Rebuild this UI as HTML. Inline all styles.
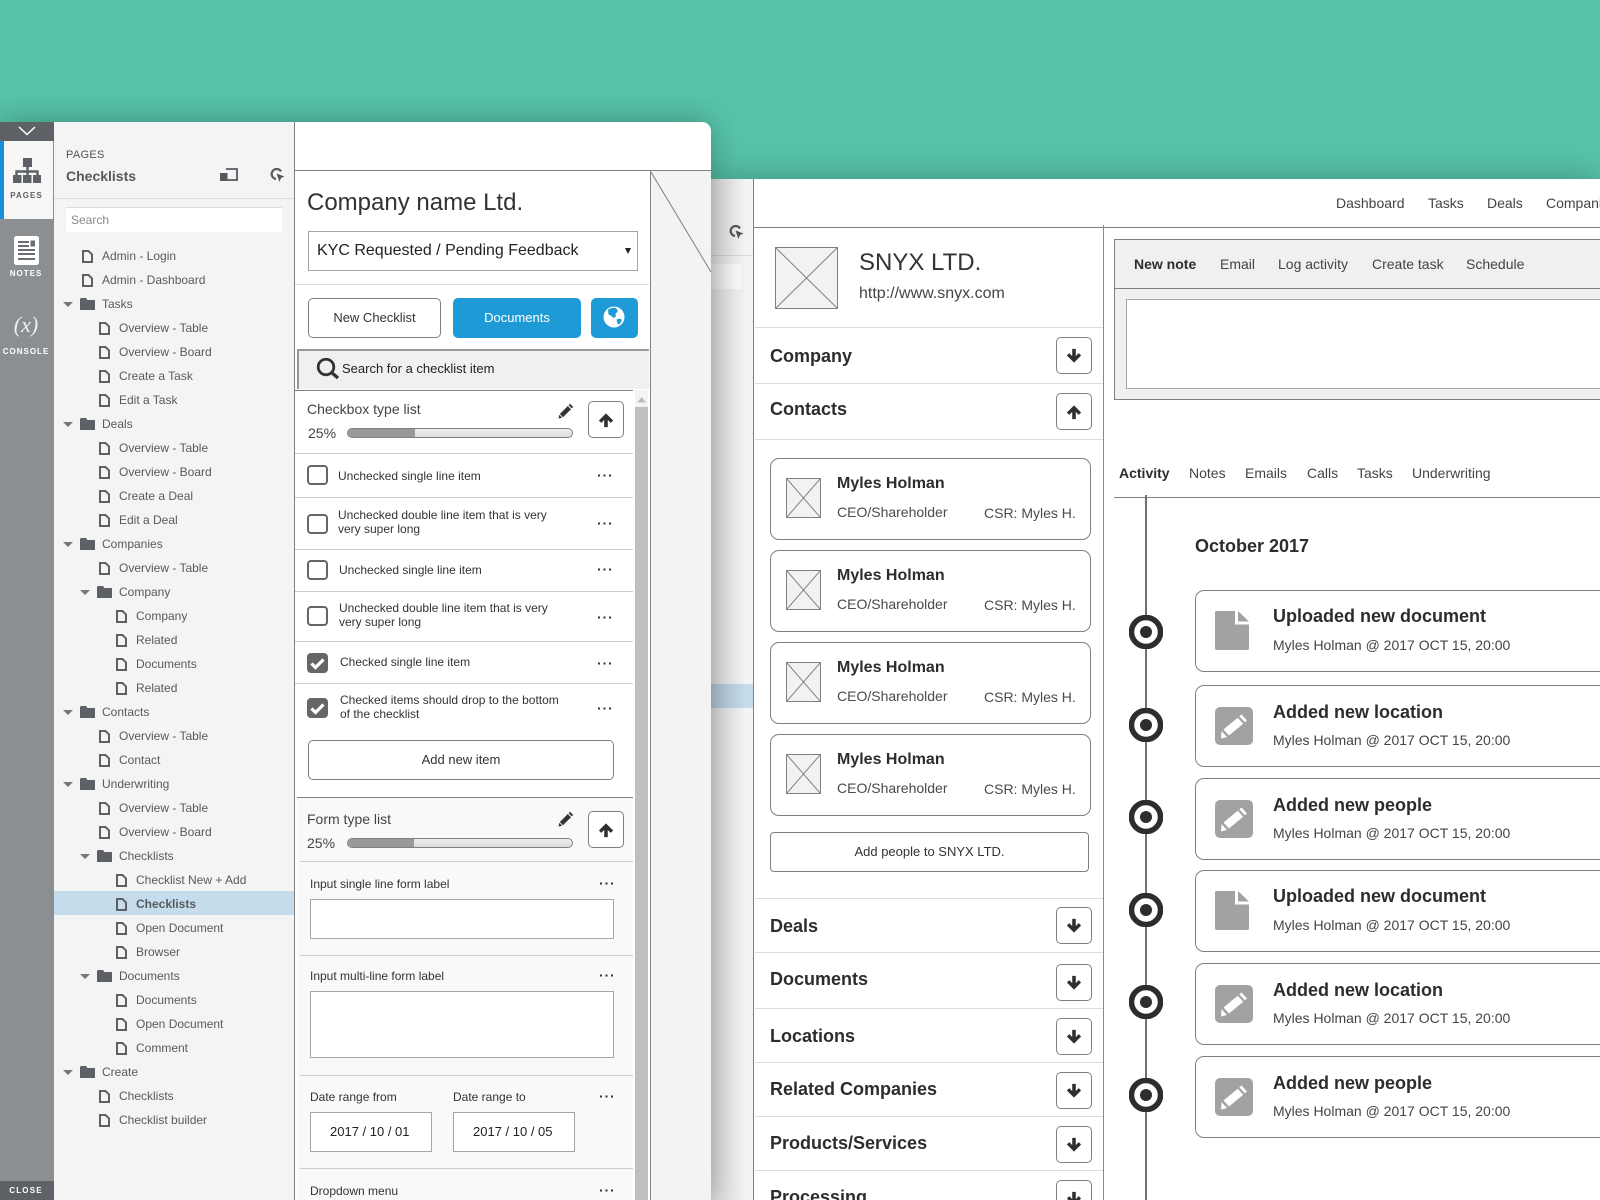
<!DOCTYPE html>
<html><head><meta charset="utf-8"><title>Wireframes</title>
<style>
html,body{margin:0;padding:0;width:1600px;height:1200px;overflow:hidden}
body{position:relative;background:#57c4a9;font-family:"Liberation Sans",sans-serif;color:#333}
div,svg{position:absolute;box-sizing:border-box}
#w{left:0;top:0;width:1600px;height:1200px;overflow:hidden}
.t{white-space:nowrap;line-height:20px;height:20px}
.r{left:0;width:294px;height:24px;line-height:24px;font-size:12px;color:#565a5e;white-space:nowrap}
.r svg{top:6px}
.dc{width:11px;height:13px}
.fo{width:15px;height:12px}
.tr{width:10px;height:5px}
.d0{padding-left:102px}.d0 svg{left:82px}
.d1{padding-left:119px}.d1 svg{left:99px}
.d2{padding-left:136px}.d2 svg{left:116px}
.f0{padding-left:102px}.f0 svg.fo{left:80px}.f0 svg.tr{left:63px;top:10px}
.f1{padding-left:119px}.f1 svg.fo{left:97px}.f1 svg.tr{left:80px;top:10px}
.h{height:1px;background:#ccc}
.hd{height:1px;left:755px;width:348px;background:#dedede}
.btn{border:1px solid #808080;border-radius:5px;background:#fff;text-align:center;font-size:13px;line-height:38px;color:#333}
.ab{width:36px;height:37px;border:1px solid #808080;border-radius:5px;background:#fff}
.ab svg{left:9px;top:10px;width:16px;height:16px}
.cb{left:307px;width:21px;height:20px;border:2px solid #666;border-radius:4px;background:#fff}
.cb.c{background:#666}
.cb svg{left:0;top:0;width:17px;height:16px}
.it{font-size:12px;line-height:14px;white-space:nowrap;color:#333}
.lb{font-size:12px;color:#333}
.inp{background:#fff;border:1px solid #a6a6a6}
.dt{font-size:13px;line-height:38px;padding-left:19px;color:#222;white-space:nowrap}
.ph{background:#f2f2f2;border:1px solid #808080}
.ph svg{left:0;top:0;width:100%;height:100%}
.sp{left:786px;width:35px;height:40px}
.sec{left:770px;font-size:18px;font-weight:bold;color:#2d2d2d}
.card{left:770px;width:321px;height:82px;border:1px solid #808080;border-radius:9px;background:#fff}
.cn{left:837px;font-size:16px;font-weight:bold;color:#2d2d2d}
.cs{font-size:14px;color:#4a4a4a}
.ac{left:1195px;width:500px;height:82px;border:1px solid #808080;border-radius:9px;background:#fff}
.at{left:1273px;font-size:18px;font-weight:bold;color:#2d2d2d}
.as{left:1273px;font-size:14px;color:#444}
.nav{font-size:14px;color:#444}
.dts{left:598px;width:13px;height:3px}
.rg{left:1129px;width:34px;height:34px}
.pn{left:558px;width:16px;height:16px}
.fd{left:1215px;width:34px;height:39px}
.fp{left:1215px;width:38px;height:38px}
.rl{left:0;width:52px;text-align:center;font-size:8px;font-weight:bold;letter-spacing:1px;color:#fff}
</style></head><body>
<svg width="0" height="0" style="left:0;top:0">
<defs>
<symbol id="doc" viewBox="0 0 11 13"><path d="M1 1h5.500L10 4.500V12H1z" fill="none" stroke="#5d6165" stroke-width="2"/></symbol>
<symbol id="fol" viewBox="0 0 15 12"><path d="M0 1.500Q0 0 1.500 0H6l1.500 2H15v10H0z" fill="#5d6165"/></symbol>
<symbol id="tri" viewBox="0 0 10 5"><path d="M0 0h10L5 5z" fill="#777"/></symbol>
<symbol id="up" viewBox="0 0 18 18"><path d="M9 1.500 17 9.500 14.300 12.200 11 8.900V17H7V8.900L3.700 12.200 1 9.500z" fill="#2f2f2f"/></symbol>
<symbol id="dn" viewBox="0 0 18 18"><path d="M9 16.500 17 8.500 14.300 5.800 11 9.100V1H7V9.100L3.700 5.800 1 8.500z" fill="#2f2f2f"/></symbol>
<symbol id="pen" viewBox="0 0 16 16"><path d="M12 .8 15.200 4 13.800 5.400 10.600 2.200zM9.800 3 13 6.200 5 14.200 1.800 11zM1.300 11.800 4.200 14.700 .5 15.500z" fill="#333"/></symbol>
<symbol id="dots" viewBox="0 0 13 3"><rect x="0" y=".5" width="2" height="2" fill="#333"/><rect x="5.500" y=".5" width="2" height="2" fill="#333"/><rect x="11" y=".5" width="2" height="2" fill="#333"/></symbol>
<symbol id="chk" viewBox="0 0 17 16"><path d="M2.500 8.500 6.500 12.500 14.500 4.500" fill="none" stroke="#fff" stroke-width="3.200"/></symbol>
<symbol id="ph" viewBox="0 0 100 100" preserveAspectRatio="none"><path d="M0 0 100 100M100 0 0 100" stroke="#808080" stroke-width="1" vector-effect="non-scaling-stroke"/></symbol>
<symbol id="ring" viewBox="0 0 34 34"><circle cx="17" cy="17" r="14.500" fill="#fff" stroke="#2d2d2d" stroke-width="5.500"/><circle cx="17" cy="17" r="6" fill="#2d2d2d"/></symbol>
<symbol id="fdoc" viewBox="0 0 34 39"><path d="M1.500 0H20V13.500H34V37.500Q34 39 32.500 39H1.500Q0 39 0 37.500V1.500Q0 0 1.500 0zM23 0 34 10.500H23z" fill="#a2a2a2"/></symbol>
<symbol id="fpen" viewBox="0 0 38 38"><rect width="38" height="38" rx="5" fill="#a2a2a2"/><path d="M26.500 7.500 32 13.500 29.800 15.300 24.300 9.300zM22.700 10.700 28.200 16.700 14 28.500 8.500 22.500zM6.500 24 12 30 6 31.500z" fill="#fff"/></symbol>
</defs></svg>
<div id="w">

<!-- REAR WINDOW -->
<div style="left:711px;top:179px;width:889px;height:1021px;background:#fff;box-shadow:0 0 32px rgba(0,0,0,.28)"></div>
<div style="left:711px;top:179px;width:42px;height:1021px;background:#f4f4f4"></div>
<div style="left:711px;top:255px;width:42px;height:1px;background:#ddd"></div>
<div style="left:711px;top:264px;width:30px;height:25px;background:#fff"></div>
<div style="left:711px;top:684px;width:42px;height:24px;background:#c5dced"></div>
<svg style="left:729px;top:225px" width="15" height="15" viewBox="0 0 15 15"><path d="M11 3.500A5 5 0 1 0 6 11" fill="none" stroke="#555" stroke-width="2.200"/><path d="M6.500 5.500 14.500 8.500 11 10 9.500 14z" fill="#555"/></svg>
<div style="left:711px;top:179px;width:36px;height:1021px;background:linear-gradient(90deg,rgba(0,0,0,.12),rgba(0,0,0,0))"></div>
<div style="left:753px;top:179px;width:1px;height:1021px;background:#808080"></div>
<div style="left:753px;top:227px;width:847px;height:1px;background:#808080"></div>
<div style="left:1103px;top:225px;width:1px;height:975px;background:#8a8a8a"></div>

<div class="t nav" style="left:1336px;top:193px">Dashboard</div>
<div class="t nav" style="left:1428px;top:193px">Tasks</div>
<div class="t nav" style="left:1487px;top:193px">Deals</div>
<div class="t nav" style="left:1546px;top:193px">Companies</div>

<div class="ph" style="left:775px;top:247px;width:63px;height:62px"><svg><use href="#ph"/></svg></div>
<div class="t" style="left:859px;top:253px;font-size:24px;color:#333">SNYX LTD.</div>
<div class="t" style="left:859px;top:282px;font-size:16px;color:#444;top:282px;margin-top:2px">http://www.snyx.com</div>
<div class="hd" style="top:327px"></div>
<div class="t sec" style="top:346px">Company</div>
<div class="ab" style="left:1056px;top:337px"><svg><use href="#dn"/></svg></div>
<div class="hd" style="top:383px"></div>
<div class="t sec" style="top:399px">Contacts</div>
<div class="ab" style="left:1056px;top:393px"><svg><use href="#up"/></svg></div>
<div class="hd" style="top:439px"></div>

<div class="card" style="top:458px"></div>
<div class="ph sp" style="top:478px"><svg><use href="#ph"/></svg></div>
<div class="t cn" style="top:474px">Myles Holman</div><div class="t cs" style="left:837px;top:502px">CEO/Shareholder</div><div class="t cs" style="left:984px;top:503px">CSR: Myles H.</div>
<div class="card" style="top:550px"></div>
<div class="ph sp" style="top:570px"><svg><use href="#ph"/></svg></div>
<div class="t cn" style="top:566px">Myles Holman</div><div class="t cs" style="left:837px;top:594px">CEO/Shareholder</div><div class="t cs" style="left:984px;top:595px">CSR: Myles H.</div>
<div class="card" style="top:642px"></div>
<div class="ph sp" style="top:662px"><svg><use href="#ph"/></svg></div>
<div class="t cn" style="top:658px">Myles Holman</div><div class="t cs" style="left:837px;top:686px">CEO/Shareholder</div><div class="t cs" style="left:984px;top:687px">CSR: Myles H.</div>
<div class="card" style="top:734px"></div>
<div class="ph sp" style="top:754px"><svg><use href="#ph"/></svg></div>
<div class="t cn" style="top:750px">Myles Holman</div><div class="t cs" style="left:837px;top:778px">CEO/Shareholder</div><div class="t cs" style="left:984px;top:779px">CSR: Myles H.</div>
<div class="btn" style="left:770px;top:832px;width:319px;height:40px;border-radius:4px">Add people to SNYX LTD.</div>

<div class="hd" style="top:898px"></div>
<div class="t sec" style="top:916px">Deals</div>
<div class="ab" style="left:1056px;top:907px"><svg><use href="#dn"/></svg></div>
<div class="hd" style="top:952px"></div>
<div class="t sec" style="top:969px">Documents</div>
<div class="ab" style="left:1056px;top:964px"><svg><use href="#dn"/></svg></div>
<div class="hd" style="top:1008px"></div>
<div class="t sec" style="top:1026px">Locations</div>
<div class="ab" style="left:1056px;top:1018px"><svg><use href="#dn"/></svg></div>
<div class="hd" style="top:1062px"></div>
<div class="t sec" style="top:1079px">Related Companies</div>
<div class="ab" style="left:1056px;top:1072px"><svg><use href="#dn"/></svg></div>
<div class="hd" style="top:1116px"></div>
<div class="t sec" style="top:1133px">Products/Services</div>
<div class="ab" style="left:1056px;top:1126px"><svg><use href="#dn"/></svg></div>
<div class="hd" style="top:1170px"></div>
<div class="t sec" style="top:1187px">Processing</div>
<div class="ab" style="left:1056px;top:1180px"><svg><use href="#dn"/></svg></div>

<!-- Note panel -->
<div style="left:1114px;top:239px;width:520px;height:161px;background:#f0f0f0;border:1px solid #808080"></div>
<div style="left:1114px;top:288px;width:500px;height:1px;background:#808080"></div>
<div class="inp" style="left:1126px;top:299px;width:500px;height:90px"></div>
<div class="t nav" style="left:1134px;top:254px;font-weight:bold;color:#2d2d2d">New note</div>
<div class="t nav" style="left:1220px;top:254px">Email</div>
<div class="t nav" style="left:1278px;top:254px">Log activity</div>
<div class="t nav" style="left:1372px;top:254px">Create task</div>
<div class="t nav" style="left:1466px;top:254px">Schedule</div>

<div class="t nav" style="left:1119px;top:463px;font-weight:bold;color:#2d2d2d">Activity</div>
<div class="t nav" style="left:1189px;top:463px">Notes</div>
<div class="t nav" style="left:1245px;top:463px">Emails</div>
<div class="t nav" style="left:1307px;top:463px">Calls</div>
<div class="t nav" style="left:1357px;top:463px">Tasks</div>
<div class="t nav" style="left:1412px;top:463px">Underwriting</div>
<div style="left:1114px;top:497px;width:486px;height:1px;background:#808080"></div>
<div style="left:1145px;top:495px;width:2px;height:705px;background:#707070"></div>
<div class="t" style="left:1195px;top:536px;font-size:18px;font-weight:bold;color:#2d2d2d">October 2017</div>

<svg class="rg" style="top:615px"><use href="#ring"/></svg>
<div class="ac" style="top:590px"></div>
<svg class="fd" style="top:611px"><use href="#fdoc"/></svg>
<div class="t at" style="top:606px">Uploaded new document</div><div class="t as" style="top:635px">Myles Holman @ 2017 OCT 15, 20:00</div>

<svg class="rg" style="top:708px"><use href="#ring"/></svg>
<div class="ac" style="top:685px"></div>
<svg class="fp" style="top:707px"><use href="#fpen"/></svg>
<div class="t at" style="top:702px">Added new location</div><div class="t as" style="top:730px">Myles Holman @ 2017 OCT 15, 20:00</div>

<svg class="rg" style="top:800px"><use href="#ring"/></svg>
<div class="ac" style="top:778px"></div>
<svg class="fp" style="top:800px"><use href="#fpen"/></svg>
<div class="t at" style="top:795px">Added new people</div><div class="t as" style="top:823px">Myles Holman @ 2017 OCT 15, 20:00</div>

<svg class="rg" style="top:893px"><use href="#ring"/></svg>
<div class="ac" style="top:870px"></div>
<svg class="fd" style="top:891px"><use href="#fdoc"/></svg>
<div class="t at" style="top:886px">Uploaded new document</div><div class="t as" style="top:915px">Myles Holman @ 2017 OCT 15, 20:00</div>

<svg class="rg" style="top:985px"><use href="#ring"/></svg>
<div class="ac" style="top:963px"></div>
<svg class="fp" style="top:985px"><use href="#fpen"/></svg>
<div class="t at" style="top:980px">Added new location</div><div class="t as" style="top:1008px">Myles Holman @ 2017 OCT 15, 20:00</div>

<svg class="rg" style="top:1078px"><use href="#ring"/></svg>
<div class="ac" style="top:1056px"></div>
<svg class="fp" style="top:1078px"><use href="#fpen"/></svg>
<div class="t at" style="top:1073px">Added new people</div><div class="t as" style="top:1101px">Myles Holman @ 2017 OCT 15, 20:00</div>

<!-- FRONT WINDOW -->
<div style="left:0;top:122px;width:711px;height:1078px;background:#fff;border-top-right-radius:9px;box-shadow:0 0 32px rgba(0,0,0,.3)"></div>

<!-- sidebar -->
<div style="left:54px;top:122px;width:240px;height:1078px;background:#f4f4f4"></div>
<div style="left:294px;top:122px;width:1px;height:1078px;background:#808080"></div>
<div style="left:0;top:122px;width:54px;height:1078px;background:#8b8f92"></div>
<div style="left:0;top:122px;width:54px;height:19px;background:#5e6165"></div>
<svg style="left:18px;top:126px" width="18" height="10"><path d="M1 1 9 8.500 17 1" fill="none" stroke="#fff" stroke-width="1.500"/></svg>
<div style="left:0;top:141px;width:53px;height:78px;background:#f7f7f7"></div>
<div style="left:0;top:141px;width:4px;height:78px;background:#1a8fdc"></div>
<svg style="left:13px;top:158px" width="28" height="25" viewBox="0 0 28 25"><path d="M10 0h9v9h-9zM0 17h8.500v8H0zM10 17h8.500v8H10zM20 17h8v8h-8z" fill="#5d6165"/><path d="M14.500 9v8M3.500 17v-3.500h21V17" fill="none" stroke="#5d6165" stroke-width="2.400"/></svg>
<div class="t rl" style="width:53px;top:186px;color:#5d6165">PAGES</div>
<svg style="left:14px;top:236px" width="25" height="29" viewBox="0 0 25 29"><rect x="0" y="0" width="25" height="29" rx="2.500" fill="#fff"/><path d="M4 6h11M4 10h11M4 14h17M4 18h17M4 23h17" stroke="#6a6e72" stroke-width="2"/><rect x="16.500" y="4.500" width="4.500" height="6" fill="#6a6e72"/></svg>
<div class="t rl" style="top:264px">NOTES</div>
<div class="t" style="left:0;width:52px;text-align:center;top:315px;font-family:'Liberation Serif',serif;font-style:italic;font-size:22px;color:#f0f0f0">(x)</div>
<div class="t rl" style="top:342px">CONSOLE</div>
<div style="left:0;top:1181px;width:54px;height:19px;background:#5e6165"></div>
<div class="t rl" style="top:1181px;letter-spacing:1.200px">CLOSE</div>

<div class="t" style="left:66px;top:145px;font-size:11px;letter-spacing:.3px;color:#555">PAGES</div>
<div class="t" style="left:66px;top:166px;font-size:14px;font-weight:bold;color:#55595d">Checklists</div>
<svg style="left:220px;top:168px" width="18" height="13" viewBox="0 0 18 13"><path d="M6 1h11v11H0" fill="none" stroke="#55595d" stroke-width="1.800"/><rect x="0" y="5" width="7.500" height="8" fill="#55595d"/></svg>
<svg style="left:270px;top:168px" width="15" height="15" viewBox="0 0 15 15"><path d="M11 3.500A5 5 0 1 0 6 11" fill="none" stroke="#55595d" stroke-width="2.200"/><path d="M6.500 5.500 14.500 8.500 11 10 9.500 14z" fill="#55595d"/></svg>
<div style="left:54px;top:198px;width:240px;height:1px;background:#ddd"></div>
<div style="left:66px;top:207px;width:216px;height:25px;background:#fff;border-top:1px solid #ddd;font-size:12px;line-height:24px;padding-left:5px;color:#8a8a8a">Search</div>
<div style="left:54px;top:891px;width:240px;height:24px;background:#c5dced"></div>

<div class="r d0" style="top:244px"><svg class="dc"><use href="#doc"/></svg>Admin - Login</div>
<div class="r d0" style="top:268px"><svg class="dc"><use href="#doc"/></svg>Admin - Dashboard</div>
<div class="r f0" style="top:292px"><svg class="tr"><use href="#tri"/></svg><svg class="fo"><use href="#fol"/></svg>Tasks</div>
<div class="r d1" style="top:316px"><svg class="dc"><use href="#doc"/></svg>Overview - Table</div>
<div class="r d1" style="top:340px"><svg class="dc"><use href="#doc"/></svg>Overview - Board</div>
<div class="r d1" style="top:364px"><svg class="dc"><use href="#doc"/></svg>Create a Task</div>
<div class="r d1" style="top:388px"><svg class="dc"><use href="#doc"/></svg>Edit a Task</div>
<div class="r f0" style="top:412px"><svg class="tr"><use href="#tri"/></svg><svg class="fo"><use href="#fol"/></svg>Deals</div>
<div class="r d1" style="top:436px"><svg class="dc"><use href="#doc"/></svg>Overview - Table</div>
<div class="r d1" style="top:460px"><svg class="dc"><use href="#doc"/></svg>Overview - Board</div>
<div class="r d1" style="top:484px"><svg class="dc"><use href="#doc"/></svg>Create a Deal</div>
<div class="r d1" style="top:508px"><svg class="dc"><use href="#doc"/></svg>Edit a Deal</div>
<div class="r f0" style="top:532px"><svg class="tr"><use href="#tri"/></svg><svg class="fo"><use href="#fol"/></svg>Companies</div>
<div class="r d1" style="top:556px"><svg class="dc"><use href="#doc"/></svg>Overview - Table</div>
<div class="r f1" style="top:580px"><svg class="tr"><use href="#tri"/></svg><svg class="fo"><use href="#fol"/></svg>Company</div>
<div class="r d2" style="top:604px"><svg class="dc"><use href="#doc"/></svg>Company</div>
<div class="r d2" style="top:628px"><svg class="dc"><use href="#doc"/></svg>Related</div>
<div class="r d2" style="top:652px"><svg class="dc"><use href="#doc"/></svg>Documents</div>
<div class="r d2" style="top:676px"><svg class="dc"><use href="#doc"/></svg>Related</div>
<div class="r f0" style="top:700px"><svg class="tr"><use href="#tri"/></svg><svg class="fo"><use href="#fol"/></svg>Contacts</div>
<div class="r d1" style="top:724px"><svg class="dc"><use href="#doc"/></svg>Overview - Table</div>
<div class="r d1" style="top:748px"><svg class="dc"><use href="#doc"/></svg>Contact</div>
<div class="r f0" style="top:772px"><svg class="tr"><use href="#tri"/></svg><svg class="fo"><use href="#fol"/></svg>Underwriting</div>
<div class="r d1" style="top:796px"><svg class="dc"><use href="#doc"/></svg>Overview - Table</div>
<div class="r d1" style="top:820px"><svg class="dc"><use href="#doc"/></svg>Overview - Board</div>
<div class="r f1" style="top:844px"><svg class="tr"><use href="#tri"/></svg><svg class="fo"><use href="#fol"/></svg>Checklists</div>
<div class="r d2" style="top:868px"><svg class="dc"><use href="#doc"/></svg>Checklist New + Add</div>
<div class="r d2" style="top:892px;font-weight:bold"><svg class="dc"><use href="#doc"/></svg>Checklists</div>
<div class="r d2" style="top:916px"><svg class="dc"><use href="#doc"/></svg>Open Document</div>
<div class="r d2" style="top:940px"><svg class="dc"><use href="#doc"/></svg>Browser</div>
<div class="r f1" style="top:964px"><svg class="tr"><use href="#tri"/></svg><svg class="fo"><use href="#fol"/></svg>Documents</div>
<div class="r d2" style="top:988px"><svg class="dc"><use href="#doc"/></svg>Documents</div>
<div class="r d2" style="top:1012px"><svg class="dc"><use href="#doc"/></svg>Open Document</div>
<div class="r d2" style="top:1036px"><svg class="dc"><use href="#doc"/></svg>Comment</div>
<div class="r f0" style="top:1060px"><svg class="tr"><use href="#tri"/></svg><svg class="fo"><use href="#fol"/></svg>Create</div>
<div class="r d1" style="top:1084px"><svg class="dc"><use href="#doc"/></svg>Checklists</div>
<div class="r d1" style="top:1108px"><svg class="dc"><use href="#doc"/></svg>Checklist builder</div>

<!-- checklist panel -->
<div style="left:651px;top:171px;width:60px;height:1029px;background:#f3f3f3"></div>
<svg style="left:651px;top:171px" width="60" height="102"><path d="M0 1 60 101" stroke="#808080" stroke-width="1" fill="none"/></svg>
<div style="left:295px;top:170px;width:416px;height:1px;background:#808080"></div>
<div style="left:650px;top:170px;width:1px;height:1030px;background:#808080"></div>

<div class="t" style="left:307px;top:193px;font-size:24px;color:#333">Company name Ltd.</div>
<div class="inp" style="left:308px;top:231px;width:330px;height:40px"></div>
<div class="t" style="left:317px;top:241px;font-size:16px;color:#222">KYC Requested / Pending Feedback</div>
<svg style="left:625px;top:248px" width="7" height="7"><path d="M0 0h6L3 6z" fill="#222"/></svg>
<div style="left:295px;top:284px;width:354px;height:1px;background:#dedede"></div>
<div class="btn" style="left:308px;top:298px;width:133px;height:40px">New Checklist</div>
<div class="btn" style="left:453px;top:298px;width:128px;height:40px;background:#1e9bd6;border-color:#1e9bd6;color:#fff">Documents</div>
<div style="left:591px;top:298px;width:47px;height:40px;background:#1e9bd6;border-radius:5px"></div>
<svg style="left:603px;top:306px" width="22" height="22" viewBox="0 0 22 22"><circle cx="11" cy="11" r="10.500" fill="#fff"/><path d="M5 3.500Q9 1 13 2L15 5 12.500 8 13 10.500 10.500 12 8.500 10 5.500 8.500zM13.500 13.500 17 12.500 19 14 16.500 18.500 14.500 17.500z" fill="#1e9bd6"/></svg>
<div style="left:297px;top:349px;width:352px;height:40px;background:#f0f0f0;border-top:2px solid #999;border-left:2px solid #999"></div>
<svg style="left:316px;top:358px" width="24" height="22" viewBox="0 0 24 22"><circle cx="10" cy="9" r="7.800" fill="none" stroke="#333" stroke-width="2.800"/><path d="M15.500 14.500 22 20" stroke="#333" stroke-width="3.400"/></svg>
<div class="t" style="left:342px;top:359px;font-size:13px;color:#222">Search for a checklist item</div>

<div style="left:295px;top:390px;width:338px;height:1px;background:#808080"></div>
<div style="left:635px;top:390px;width:13px;height:810px;background:#f4f4f4"></div>
<div style="left:635px;top:407px;width:13px;height:793px;background:#bfbfbf"></div>
<svg style="left:637px;top:397px" width="9" height="6"><path d="M0 5.500 4.500 0 9 5.500z" fill="#bdbdbd"/></svg>

<div class="t" style="left:307px;top:399px;font-size:14px;color:#444">Checkbox type list</div>
<svg class="pn" style="top:403px"><use href="#pen"/></svg>
<div class="ab" style="left:588px;top:401px"><svg><use href="#up"/></svg></div>
<div class="t" style="left:308px;top:423px;font-size:14px;color:#444">25%</div>
<div style="left:347px;top:428px;width:226px;height:10px;border:1px solid #808080;border-radius:5px;background:linear-gradient(#ededed,#ddd);overflow:hidden"><div style="left:0;top:0;width:67px;height:8px;background:#999"></div></div>
<div class="h" style="left:295px;top:453px;width:338px"></div>

<div class="cb" style="top:465px"></div>
<div class="it" style="left:338px;top:469px">Unchecked single line item</div>
<svg class="dts" style="top:474px"><use href="#dots"/></svg>
<div class="h" style="left:295px;top:497px;width:338px"></div>
<div class="cb" style="top:514px"></div>
<div class="it" style="left:338px;top:508px">Unchecked double line item that is very<br>very super long</div>
<svg class="dts" style="top:522px"><use href="#dots"/></svg>
<div class="h" style="left:295px;top:549px;width:338px"></div>
<div class="cb" style="top:560px"></div>
<div class="it" style="left:339px;top:563px">Unchecked single line item</div>
<svg class="dts" style="top:568px"><use href="#dots"/></svg>
<div class="h" style="left:295px;top:591px;width:338px"></div>
<div class="cb" style="top:606px"></div>
<div class="it" style="left:339px;top:601px">Unchecked double line item that is very<br>very super long</div>
<svg class="dts" style="top:616px"><use href="#dots"/></svg>
<div class="h" style="left:295px;top:641px;width:338px"></div>
<div class="cb c" style="top:653px"><svg><use href="#chk"/></svg></div>
<div class="it" style="left:340px;top:655px">Checked single line item</div>
<svg class="dts" style="top:662px"><use href="#dots"/></svg>
<div class="h" style="left:295px;top:683px;width:338px"></div>
<div class="cb c" style="top:698px"><svg><use href="#chk"/></svg></div>
<div class="it" style="left:340px;top:693px">Checked items should drop to the bottom<br>of the checklist</div>
<svg class="dts" style="top:707px"><use href="#dots"/></svg>
<div class="btn" style="left:308px;top:740px;width:306px;height:40px">Add new item</div>

<div style="left:297px;top:797px;width:336px;height:403px;background:#f9f9f9;border-top:1px solid #808080"></div>
<div class="t" style="left:307px;top:809px;font-size:14px;color:#444">Form type list</div>
<svg class="pn" style="top:811px"><use href="#pen"/></svg>
<div class="ab" style="left:588px;top:811px"><svg><use href="#up"/></svg></div>
<div class="t" style="left:307px;top:833px;font-size:14px;color:#444">25%</div>
<div style="left:347px;top:838px;width:226px;height:10px;border:1px solid #808080;border-radius:5px;background:linear-gradient(#ededed,#ddd);overflow:hidden"><div style="left:0;top:0;width:66px;height:8px;background:#999"></div></div>
<div class="h" style="left:300px;top:861px;width:333px"></div>
<div class="t lb" style="left:310px;top:874px">Input single line form label</div>
<svg class="dts" style="left:600px;top:882px"><use href="#dots"/></svg>
<div class="inp" style="left:310px;top:899px;width:304px;height:40px"></div>
<div class="h" style="left:300px;top:955px;width:333px"></div>
<div class="t lb" style="left:310px;top:966px">Input multi-line form label</div>
<svg class="dts" style="left:600px;top:974px"><use href="#dots"/></svg>
<div class="inp" style="left:310px;top:991px;width:304px;height:67px"></div>
<div class="h" style="left:300px;top:1075px;width:333px"></div>
<div class="t lb" style="left:310px;top:1087px">Date range from</div>
<div class="t lb" style="left:453px;top:1087px">Date range to</div>
<svg class="dts" style="left:600px;top:1095px"><use href="#dots"/></svg>
<div class="inp dt" style="left:310px;top:1112px;width:122px;height:40px">2017 / 10 / 01</div>
<div class="inp dt" style="left:453px;top:1112px;width:122px;height:40px">2017 / 10 / 05</div>
<div class="h" style="left:300px;top:1168px;width:333px"></div>
<div class="t lb" style="left:310px;top:1181px">Dropdown menu</div>
<svg class="dts" style="left:600px;top:1189px"><use href="#dots"/></svg>
</div>
</body></html>
